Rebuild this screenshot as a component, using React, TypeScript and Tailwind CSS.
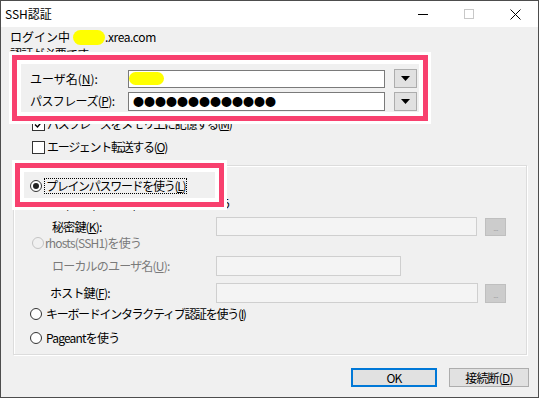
import React from "react";

const font = "font-['Noto_Sans_CJK_JP','Noto_Sans',sans-serif]";

function Radio({ checked = false, disabled = false }: { checked?: boolean; disabled?: boolean }) {
    return (
        <span
            className={
                disabled
                    ? "flex h-[12px] w-[12px] shrink-0 items-center justify-center rounded-full border border-[#c4c4c4] bg-[#f0f0f0]"
                    : "flex h-[12px] w-[12px] shrink-0 items-center justify-center rounded-full border border-[#333333] bg-white"
            }
        >
            {checked && <span className="h-[6px] w-[6px] rounded-full bg-[#222222]" />}
        </span>
    );
}

function Check({ checked = false }: { checked?: boolean }) {
    return (
        <span className="flex h-[13px] w-[13px] shrink-0 items-center justify-center border border-[#333333] bg-white">
            {checked && (
                <svg width="9" height="9" viewBox="0 0 9 9">
                    <path d="M1 4.5 L3.5 7 L8 1.5" stroke="#000" strokeWidth="1.4" fill="none" />
                </svg>
            )}
        </span>
    );
}

const DropButton: React.FC = () => (
    <div className="ml-[9px] flex h-[19px] w-[23px] items-center justify-center border border-[#adadad] bg-[#e1e1e1]">
        <svg width="9" height="5" viewBox="0 0 9 5">
            <path d="M0 0 L9 0 L4.5 5 Z" fill="#000" />
        </svg>
    </div>
);

const DotsButton: React.FC<{ className?: string }> = ({ className }) => (
    <div className={`flex w-[21px] items-end justify-center border border-[#bfbfbf] bg-[#cccccc] pb-[3px] ${className ?? ""}`}>
        <span className="text-[8px] leading-none text-[#a3a3a3]">...</span>
    </div>
);

export default function App() {
    return (
        <div className={`relative flex h-[398px] w-[539px] flex-col border border-[#4d4d4d] bg-[#f0f0f0] text-[12px] leading-[16px] tracking-[-0.8px] text-black ${font}`}>
            {/* title bar */}
            <div className="flex h-[26px] shrink-0 items-center bg-white">
                <span className="pl-[4px] tracking-normal">SSH認証</span>
                <div className="ml-auto flex h-full">
                    <div className="flex w-[46px] items-center justify-center">
                        <span className="h-px w-[10px] bg-black" />
                    </div>
                    <div className="flex w-[46px] items-center justify-center">
                        <span className="h-[10px] w-[10px] border border-[#c8c8c8]" />
                    </div>
                    <div className="flex w-[46px] items-center justify-center">
                        <svg width="11" height="11" viewBox="0 0 11 11">
                            <path d="M0.5 0.5 L10.5 10.5 M10.5 0.5 L0.5 10.5" stroke="#000" strokeWidth="1" />
                        </svg>
                    </div>
                </div>
            </div>

            {/* header text */}
            <div className="mt-[2px] flex h-[16px] items-center pl-[9px]">
                <span className="tracking-normal">ログイン中</span>
                <span className="ml-[3px] h-[15px] w-[32px] rounded-[8px] bg-[#ffff00]" />
                <span className="tracking-[-0.4px]">.xrea.com</span>
            </div>
            <div className="mt-[1px] flex h-[16px] items-center pl-[9px]">認証が必要です.</div>

            {/* user / passphrase */}
            <div className="mt-[7px] flex h-[19px] items-center pl-[29px]">
                <span className="w-[98px] tracking-normal">
                    ユーザ名(<u>N</u>):
                </span>
                <div className="flex h-[18px] w-[257px] items-center border border-[#7a7a7a] bg-white">
                    <span className="h-[13px] w-[35px] rounded-[7px] bg-[#ffff00]" />
                </div>
                <DropButton />
            </div>
            <div className="mt-[3px] flex h-[20px] items-center pl-[29px]">
                <span className="w-[98px] tracking-[-0.6px]">
                    パスフレーズ(<u>P</u>):
                </span>
                <div className="flex h-[19px] w-[257px] items-center border border-[#7a7a7a] bg-white pl-[4px]">
                    <span className="text-[11px] leading-none tracking-[0px]">●●●●●●●●●●●●●</span>
                </div>
                <DropButton />
            </div>

            {/* checkboxes */}
            <div className="mt-[2px] flex h-[22px] items-center pl-[31px]">
                <Check checked />
                <span className="ml-[2px] tracking-[-1.3px]">
                    パスフレーズをメモリ上に記憶する(<u>M</u>)
                </span>
            </div>
            <div className="mt-[1px] flex h-[22px] items-center pl-[31px]">
                <Check />
                <span className="ml-[2px] tracking-[-1.3px]">
                    エージェント転送する(<u>O</u>)
                </span>
            </div>

            {/* method group */}
            <div className="ml-[12px] mt-[7px] flex h-[190px] w-[514px] flex-col border border-[#dcdcdc] shadow-[1px_1px_0_#ffffff,inset_1px_1px_0_#ffffff]">
                <div className="mt-[10px] flex h-[20px] items-center pl-[16px]">
                    <Radio checked />
                    <span className="ml-[2px] border border-dotted border-black px-[1px] leading-[14px] tracking-[-1.3px]">
                        プレインパスワードを使う(<u>L</u>)
                    </span>
                </div>
                <div className="flex h-[15px] items-center pl-[16px]">
                    <Radio />
                    <span className="ml-[4px] tracking-[-0.3px]">RSA/DSA/ECDSA/ED25519鍵を使う</span>
                </div>
                <div className="mt-[6px] flex h-[19px] items-center pl-[38px]">
                    <span className="w-[164px]">
                        秘密鍵(<u>K</u>):
                    </span>
                    <div className="h-[19px] w-[261px] border border-[#cfcfcf] bg-[#f4f4f4]" />
                    <DotsButton className="ml-[8px] h-[18px]" />
                </div>
                <div className="flex h-[14px] items-center pl-[18px] text-[#7a7a7a]">
                    <Radio disabled />
                    <span className="ml-[1px]">rhosts(SSH1)を使う</span>
                </div>
                <div className="mt-[6px] flex h-[20px] items-center pl-[38px] text-[#7a7a7a]">
                    <span className="w-[164px]">
                        ローカルのユーザ名(<u>U</u>):
                    </span>
                    <div className="h-[20px] w-[185px] border border-[#cfcfcf] bg-[#f4f4f4]" />
                </div>
                <div className="mt-[7px] flex h-[20px] items-center pl-[36px]">
                    <span className="w-[166px]">
                        ホスト鍵(<u>F</u>):
                    </span>
                    <div className="h-[20px] w-[262px] border border-[#cfcfcf] bg-[#f4f4f4]" />
                    <DotsButton className="ml-[7px] h-[19px]" />
                </div>
                <div className="mt-[2px] flex h-[18px] items-center pl-[16px]">
                    <Radio />
                    <span className="ml-[4px] tracking-[-1.3px]">
                        キーボードインタラクティブ認証を使う(<u>I</u>)
                    </span>
                </div>
                <div className="mt-[6px] flex h-[18px] items-center pl-[16px]">
                    <Radio />
                    <span className="ml-[4px]">Pageantを使う</span>
                </div>
            </div>

            {/* buttons */}
            <div className="mt-[13px] flex h-[19px] justify-end gap-[12px] pr-[9px]">
                <div className="flex w-[86px] items-center justify-center border-2 border-[#0078d7] bg-[#e1e1e1]">OK</div>
                <div className="flex w-[80px] items-center justify-center border border-[#adadad] bg-[#e1e1e1]">
                    接続断(<u>D</u>)
                </div>
            </div>

            {/* annotation boxes */}
            <div className="pointer-events-none absolute left-[11px] top-[54px] h-[66px] w-[416px] border-[5px] border-[#f8406e] shadow-[0_0_0_3px_#ffffff,inset_0_0_0_4px_#ffffff]" />
            <div className="pointer-events-none absolute left-[14px] top-[162px] h-[44px] w-[209px] border-[5px] border-[#f8406e] shadow-[0_0_0_3px_#ffffff,inset_0_0_0_4px_#ffffff]" />
        </div>
    );
}
